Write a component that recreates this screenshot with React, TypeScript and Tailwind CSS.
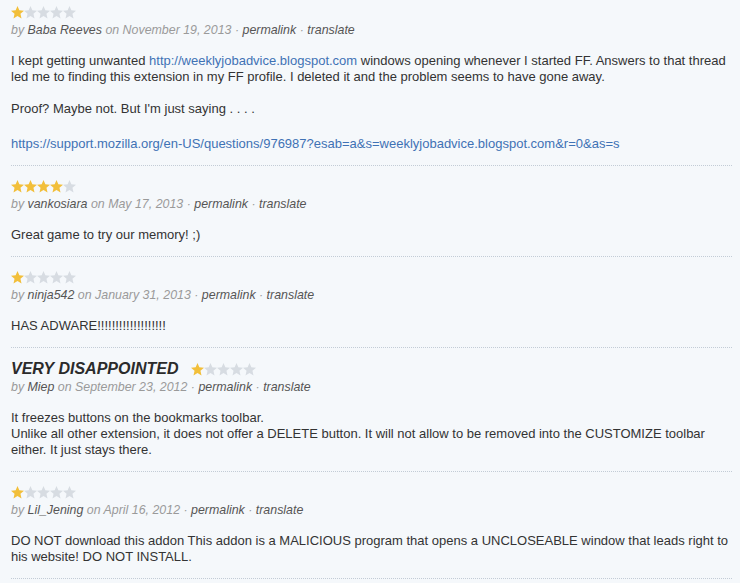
import React from 'react';

interface Review {
  title?: string;
  rating: number;
  author: string;
  date: string;
  body: React.ReactNode;
}

const Star: React.FC<{ filled: boolean }> = ({ filled }) => (
  <svg width="13" height="13" viewBox="1 1 22 22" className="shrink-0">
    <polygon
      points="12,1 15.1,8.2 23,8.9 17,14.1 18.8,22 12,17.8 5.2,22 7,14.1 1,8.9 8.9,8.2"
      fill={filled ? '#f2bf3a' : '#d7dce2'}
    />
  </svg>
);

const Stars: React.FC<{ rating: number }> = ({ rating }) => (
  <div className="flex items-center h-3">
    {[1, 2, 3, 4, 5].map((i) => (
      <Star key={i} filled={i <= rating} />
    ))}
  </div>
);

const linkCls = 'text-[#3f72b5]';

const reviews: Review[] = [
  {
    rating: 1,
    author: 'Baba Reeves',
    date: 'November 19, 2013',
    body: (
      <>
        <p>
          I kept getting unwanted <span className={linkCls}>http://weeklyjobadvice.blogspot.com</span> windows opening
          whenever I started FF. Answers to that thread led me to finding this extension in my FF profile. I deleted it
          and the problem seems to have gone away.
        </p>
        <p className="mt-4">Proof? Maybe not. But I'm just saying . . . .</p>
        <p className={`mt-[19px] ${linkCls}`}>
          https://support.mozilla.org/en-US/questions/976987?esab=a&amp;s=weeklyjobadvice.blogspot.com&amp;r=0&amp;as=s
        </p>
      </>
    ),
  },
  {
    rating: 4,
    author: 'vankosiara',
    date: 'May 17, 2013',
    body: <p>Great game to try our memory! ;)</p>,
  },
  {
    rating: 1,
    author: 'ninja542',
    date: 'January 31, 2013',
    body: <p>HAS ADWARE!!!!!!!!!!!!!!!!!!!</p>,
  },
  {
    title: 'VERY DISAPPOINTED',
    rating: 1,
    author: 'Miep',
    date: 'September 23, 2012',
    body: (
      <p>
        It freezes buttons on the bookmarks toolbar.
        <br />
        Unlike all other extension, it does not offer a DELETE button. It will not allow to be removed into the
        CUSTOMIZE toolbar either. It just stays there.
      </p>
    ),
  },
  {
    rating: 1,
    author: 'Lil_Jening',
    date: 'April 16, 2012',
    body: (
      <p>
        DO NOT download this addon This addon is a MALICIOUS program that opens a UNCLOSEABLE window that leads right to
        his website! DO NOT INSTALL.
      </p>
    ),
  },
];

const ReviewItem: React.FC<{ review: Review; first: boolean }> = ({ review, first }) => (
  <div
    className={`${first ? 'pt-[6px]' : review.title ? 'pt-[11px]' : 'pt-[14px]'} pb-[13px] border-b border-dotted border-[#c3ccd6]`}
  >
    {review.title ? (
      <div className="flex items-center gap-[13px] h-5">
        <h3 className="text-[16px] font-bold italic text-[#2b2b2b] leading-5">{review.title}</h3>
        <Stars rating={review.rating} />
      </div>
    ) : (
      <Stars rating={review.rating} />
    )}
    <div className={`${review.title ? 'mt-0' : 'mt-1'} text-[12.4px] leading-4 italic text-[#9a9a9a]`}>
      by <span className="text-[#555]">{review.author}</span> on {review.date} ·{' '}
      <span className="text-[#555]">permalink</span> · <span className="text-[#555]">translate</span>
    </div>
    <div className="mt-[15px] text-[13px] leading-4 text-[#333]">{review.body}</div>
  </div>
);

export default function App() {
  return (
    <div
      className="min-h-[583px] w-full bg-[#f5f8fb] pl-[11px] pr-[8px]"
      style={{ fontFamily: '"Liberation Sans", Arial, sans-serif' }}
    >
      {reviews.map((r, i) => (
        <ReviewItem key={r.author} review={r} first={i === 0} />
      ))}
    </div>
  );
}
